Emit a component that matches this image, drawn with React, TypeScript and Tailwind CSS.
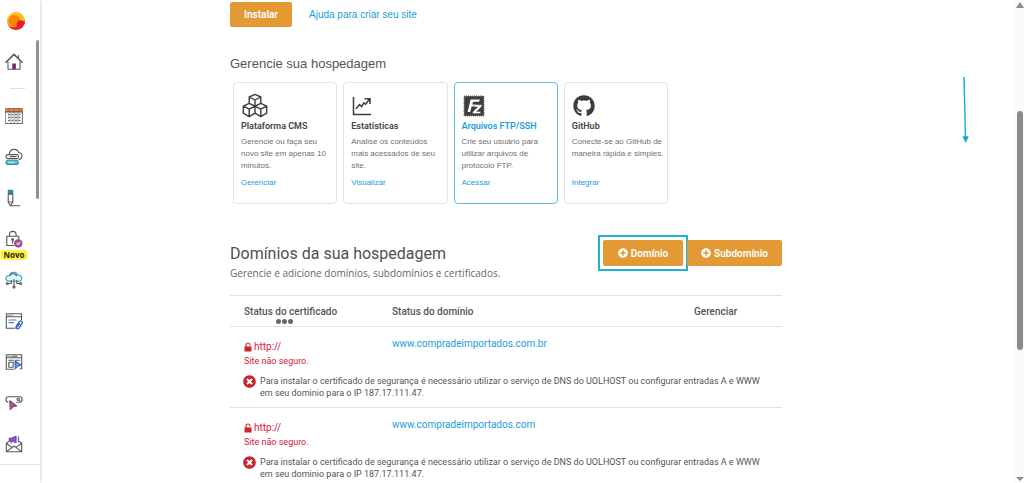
import type { ReactNode } from "react";
import { FaGithub, FaPlusCircle, FaTimesCircle } from "react-icons/fa";

const line = {
  fill: "none",
  stroke: "#58585c",
  strokeWidth: 1.1,
  strokeLinecap: "round" as const,
  strokeLinejoin: "round" as const,
};

function Glyph({ children }: { children: ReactNode }) {
  return (
    <svg viewBox="0 0 18 18" className="size-[18px]" aria-hidden="true" {...line}>
      {children}
    </svg>
  );
}

function HomeIcon() {
  return (
    <Glyph>
      <path d="M1 9.3 9 1.4l8 7.9" strokeWidth="1.6" />
      <path d="M3 9v7.3h12V9M13.5 2.6v3" />
      <path d="M7.3 10.5h3.6v5.6H7.3z" fill="#742a66" stroke="none" />
    </Glyph>
  );
}

function CalendarIcon() {
  return (
    <Glyph>
      <path d="M.6 1.5h16.8v3.4H.6z" fill="#e8833a" stroke="#8a5a3a" strokeWidth=".8" />
      <path d="M.6 4.9h16.8v11.6H.6z" strokeWidth=".9" />
      <path d="M3 7.5h2.2M6.6 7.5h2M10 7.5h2M13.3 7.5h2.2M3 10.5h2.2M6.6 10.5h2M10 10.5h2M13.3 10.5h2.2M3 13.6h2.2M6.6 13.6h2M10 13.6h2M13.3 13.6h2.2" strokeWidth="1.5" stroke="#77777b" strokeLinecap="butt" />
      <path d="M5.9 5v11M9.3 5v11M12.7 5v11" strokeWidth=".5" />
      <path d="M4 2v2M9 2v2M14 2v2" strokeWidth=".8" stroke="#8a5a3a" />
    </Glyph>
  );
}

function CloudServerIcon() {
  return (
    <Glyph>
      <path d="M4.3 6.5C4.5 3.4 6.5 1.4 9.2 1.4c2.2 0 3.8 1.2 4.4 3.1 2 .2 3.4 1.7 3.4 3.7 0 1.8-1.2 3-3 3.3" />
      <rect x="1" y="6.6" width="12.4" height="4" rx="1.6" />
      <path d="M5 8.6h6" />
      <rect x="1" y="12.2" width="12.4" height="4.2" rx="2" fill="#5db9cc" stroke="#3795ab" />
      <path d="M3.5 14.3h6" stroke="#e5f7fa" strokeWidth=".9" />
    </Glyph>
  );
}

function PenIcon() {
  return (
    <Glyph>
      <path d="M3.3 1.3h4.4v3.2H3.3z" fill="#24869e" stroke="#24869e" />
      <path d="M3.2 5.2v8l2.3 3.6 2.3-3.6v-8zM3.2 13h4.6M5.5 16.8h9.3" />
    </Glyph>
  );
}

function LockIcon() {
  return (
    <Glyph>
      <path d="M4.5 6.3V4.6c0-4.3 6.6-4.3 6.6 0v1.7M9 15.5H1.8V6.3h12v3" />
      <path d="M7.6 8.6v4.5" stroke="#8a3f86" strokeWidth="1.3" />
      <circle cx="7.6" cy="9.6" r="1.4" fill="#8a3f86" stroke="none" />
      <circle cx="13.3" cy="13.4" r="3.6" fill="#a05a99" stroke="#8a3f86" />
      <path d="m11.8 13.4 1.1 1.1 2-2.1" stroke="#ecd7ea" />
    </Glyph>
  );
}

function CloudNetworkIcon() {
  return (
    <Glyph>
      <path d="M4.2 10.2c-4.2-.2-4.3-5.8 0-5.6C5.2.7 11.3.1 12.5 4c5.2-.4 5.6 5.9 1.3 6.2z" fill="#e4f6fa" stroke="#3aa4bd" />
      <path d="M5.4 4.5c.7-2 5-2.6 6 .3" />
      <path d="M9 8.3v7M6.2 9.3v3.2H3.3M11.8 9.3v3.2h2.9" />
      <circle cx="9" cy="16" r="1" />
      <circle cx="2.3" cy="12.5" r="1" />
      <circle cx="15.7" cy="12.5" r="1" />
    </Glyph>
  );
}

function BrowserLinkIcon() {
  return (
    <Glyph>
      <path d="M10 16.3H1.3V1.7h15.2v6M1.3 4.8h15.2M3 3.2h.2M5 3.2h.2M7 3.2h.2" />
      <path d="M4 8h7M4 10.6h4.6" stroke="#4d7bd6" />
      <path d="m12 12.8 2.4-3.2a1.6 1.6 0 0 1 2.5 2l-1.4 1.8M14.6 11.6l-2.3 3.2M13.3 12l-1.8 2.2a1.6 1.6 0 0 0 2.5 2l1.8-2.4" stroke="#315fc4" strokeWidth="1.3" />
    </Glyph>
  );
}

function BrowserCursorIcon() {
  return (
    <Glyph>
      <path d="M9 16.3H1.3V1.7h15.4v14H15M1.3 4.8h15.4M3 3.2h.2M5 3.2h.2M7 3.2h5" />
      <path d="M3.8 7.2h4.6M3.8 9.2h4.4v5H3.8zM10.3 7.2h4.3" />
      <path d="m10 8 6.2 3.9-2.9.9-2.9 2.8z" fill="#6f9be8" stroke="#315fc4" />
    </Glyph>
  );
}

function SearchCursorIcon() {
  return (
    <Glyph>
      <path d="M3 8.2c-3-.5-2.4-5.4.4-5.4h11.4c3 0 3 5.5 0 5.5h-3.2" />
      <circle cx="13.2" cy="5.2" r="1.2" />
      <path d="m14.1 6.1 1 1" />
      <path d="m4.8 6.8 7 5.2-3.8.6-2.8 3z" fill="#a85b87" stroke="#8c4470" />
    </Glyph>
  );
}

function MailIcon() {
  return (
    <Glyph>
      <path d="M4 6.4 1.3 8.2v8.5h15.4V8.2L14 6.4M1.3 8.2l6 4.4M16.7 8.2l-6 4.4M1.5 16.6 9 11l7.5 5.6" />
      <path d="M4.3 3.2h2.2L11 1.3v6.2L6.5 5.9H4.3zM6.2 6v2.2" fill="#8b5ac4" stroke="#7440b4" />
      <path d="M13.4 1.7v5.2" stroke="#7440b4" />
    </Glyph>
  );
}

function Logo() {
  return (
    <svg viewBox="0 0 18 18" className="size-[18px]" aria-hidden="true">
      <defs>
        <clipPath id="disc">
          <circle cx="9" cy="9" r="9" />
        </clipPath>
      </defs>
      <g clipPath="url(#disc)">
        <path d="M0 0h18v18H0z" fill="#fbc01a" />
        <path d="M0 11c2 4 6 5 9.5 3.5L18 7v11H0z" fill="#ee1c30" />
        <path d="M9 0c5 1 9 5 9 10l-4-1z" fill="#fbc01a" />
        <circle cx="7.4" cy="9" r="6" fill="#fa8608" />
        <circle cx="13.8" cy="12.4" r="4.1" fill="#ee1c30" />
      </g>
    </svg>
  );
}

const navItems: { label: string; icon: ReactNode; badge?: string }[] = [
  { label: "Agenda", icon: <CalendarIcon /> },
  { label: "Hospedagem", icon: <CloudServerIcon /> },
  { label: "Criador de sites", icon: <PenIcon /> },
  { label: "Certificados", icon: <LockIcon />, badge: "Novo" },
  { label: "Nuvem", icon: <CloudNetworkIcon /> },
  { label: "Domínios", icon: <BrowserLinkIcon /> },
  { label: "Sites", icon: <BrowserCursorIcon /> },
  { label: "Busca", icon: <SearchCursorIcon /> },
  { label: "E-mail", icon: <MailIcon /> },
];

function Sidebar() {
  return (
    <aside className="relative h-full w-10 shrink-0 bg-white shadow-[0_0_4px_rgba(0,0,0,0.25)]">
      <nav className="flex w-7 flex-col items-center">
        <a href="#inicio" aria-label="Início" className="flex h-[41px] items-center pl-[3px]">
          <Logo />
        </a>
        <a href="#painel" aria-label="Painel" className="flex h-[41px] items-center">
          <HomeIcon />
        </a>
        <hr className="my-[6px] ml-[6px] w-[15px] border-[#dedede]" />
        {navItems.map((item) => (
          <a
            key={item.label}
            href="#servico"
            aria-label={item.label}
            className="relative flex h-[41px] items-center"
          >
            {item.icon}
            {item.badge && (
              <span className="absolute top-8 left-1/2 z-10 -translate-x-1/2 rounded-[3px] bg-[#fff23f] px-[3px] font-['Open_Sans',sans-serif] text-[8px] leading-[10px] font-bold text-[#222]">
                {item.badge}
              </span>
            )}
          </a>
        ))}
      </nav>
      <hr className="border-[#e3e3e3]" />
      <div className="absolute top-10 right-[1px] h-[159px] w-[3px] rounded-full bg-[#929292]" />
    </aside>
  );
}

function CubesIcon() {
  return (
    <svg viewBox="0 0 26 26" className="size-[26px]" fill="none" stroke="#3d3d3d" strokeWidth="1.4" strokeLinejoin="round" aria-hidden="true">
      <path d="M13 1.3 18.8 4v6.3L13 13.2l-5.8-2.9V4zM7.2 4 13 7l5.8-3M13 7v6.2" />
      <path d="M7.2 10.4 1.3 13.2v7l5.9 3.5 5.8-3.5v-7M1.3 13.2l5.9 3 5.8-3M7.2 16.2v7.5" />
      <path d="m18.8 10.4 5.9 2.8v7l-5.9 3.5-5.8-3.5M13 13.2l5.8 3 5.9-3M18.8 16.2v7.5" />
    </svg>
  );
}

function TrendIcon() {
  return (
    <svg viewBox="0 0 20 20" className="size-5" fill="none" stroke="#3d3d3d" strokeWidth="1.5" aria-hidden="true">
      <path d="M1.5 1v17.5H19M4 12.7l3.5-4.2 2.2 2 2.2-3.6 1.8 1.4L17.5 3M12.6 2.7H18v5.2" />
    </svg>
  );
}

function FilezillaIcon() {
  return (
    <svg viewBox="0 0 22 22" className="size-[22px]" aria-hidden="true">
      <path d="M1.2 1.2h19.6v19.6H1.2z" fill="#3d3d3d" />
      <path d="M1 1h20v20H1z" fill="none" stroke="#3d3d3d" strokeWidth=".8" strokeDasharray="1 1" />
      <path d="M4.6 17 7.6 4.4h9.2l-.7 2.4H10l-.7 2.6h4.4l-.6 2.2H8.6L7.2 17z" fill="#fff" />
      <path d="M11.2 9.8H19l-.5 2-4.9 4.6h4.2l-.6 2.2H9.4l.6-2.2 4.7-4.4h-4.1z" fill="#fff" stroke="#3d3d3d" strokeWidth=".4" />
    </svg>
  );
}

function OpenLockIcon() {
  return (
    <svg viewBox="0 0 8 10" className="h-[10px] w-2" aria-hidden="true">
      <path d="M.5 4.4h7v5.1h-7z" fill="#c9252d" />
      <path d="M2 4.8V3c0-2.6 4-2.6 4 0v.6" fill="none" stroke="#c9252d" strokeWidth="1.1" />
    </svg>
  );
}

const tools = [
  { title: "Plataforma CMS", text: "Gerencie ou faça seu novo site em apenas 10 minutos.", action: "Gerenciar", icon: <CubesIcon /> },
  { title: "Estatísticas", text: "Analise os conteúdos mais acessados de seu site.", action: "Visualizar", icon: <TrendIcon /> },
  { title: "Arquivos FTP/SSH", text: "Crie seu usuário para utilizar arquivos de protocolo FTP.", action: "Acessar", icon: <FilezillaIcon />, active: true },
  { title: "GitHub", text: "Conecte-se ao GitHub de maneira rápida e simples.", action: "Integrar", icon: <FaGithub className="size-[22px] text-[#3d3d3d]" aria-hidden="true" /> },
];

function ToolCards() {
  return (
    <div className="mt-[9px] ml-[3px] grid w-[435px] grid-cols-4 gap-[6px] font-['Liberation_Sans',sans-serif]">
      {tools.map((tool) => (
        <article
          key={tool.title}
          className={
            tool.active
              ? "flex h-[122px] flex-col rounded-[4px] border border-[#62bce0] pt-[9px] pr-[2px] pl-[7px]"
              : "flex h-[122px] flex-col rounded-[4px] border border-[#e4e4e4] pt-[9px] pr-[2px] pl-[7px]"
          }
        >
          <div className="flex h-7 items-center pl-px">{tool.icon}</div>
          <h3
            className={
              tool.active
                ? "font-[Roboto,sans-serif] text-[9px] leading-3 font-semibold text-[#1a9ce0]"
                : "font-[Roboto,sans-serif] text-[9px] leading-3 font-semibold text-[#444]"
            }
          >
            {tool.title}
          </h3>
          <p className="mt-1 h-9 text-[8px] leading-3 text-[#707070]">{tool.text}</p>
          <a href="#ferramenta" className="mt-[5px] text-[8px] leading-3 text-[#1a9ce0]">
            {tool.action}
          </a>
        </article>
      ))}
    </div>
  );
}

function AddButton({ label, highlighted }: { label: string; highlighted?: boolean }) {
  return (
    <div className={highlighted ? "w-20 outline-2 outline-offset-3 outline-[#1fb3d1]" : "w-[95px]"}>
      <button
        type="button"
        className="flex h-[26px] w-full items-center justify-center gap-[3px] rounded-[2px] bg-[#e39a35] font-[Roboto,sans-serif] text-[10px] font-semibold text-white"
      >
        <FaPlusCircle className="size-[10px]" aria-hidden="true" />
        {label}
      </button>
    </div>
  );
}

const domains = ["www.compradeimportados.com.br", "www.compradeimportados.com"];

function DomainTable() {
  return (
    <table className="mt-[15px] w-full table-fixed border-t border-[#e2e2e2] font-[Roboto,sans-serif] text-[10px]">
      <colgroup>
        <col className="w-[162px]" />
        <col className="w-[302px]" />
        <col />
      </colgroup>
      <thead>
        <tr className="h-[31px] border-b border-[#e2e2e2] text-left text-[#555]">
          <th className="pl-[14px] font-medium">
            <span className="relative">
              Status do certificado
              <span className="absolute top-[13px] left-8 flex gap-px">
                <i className="size-[5px] rounded-full bg-[#666]" />
                <i className="size-[5px] rounded-full bg-[#666]" />
                <i className="size-[5px] rounded-full bg-[#666]" />
              </span>
            </span>
          </th>
          <th className="font-medium">Status do domínio</th>
          <th className="font-medium">Gerenciar</th>
        </tr>
      </thead>
      {domains.map((domain) => (
        <tbody key={domain} className="border-b border-[#e2e2e2]">
          <tr className="align-top">
            <td className="pt-[13px] pl-[14px] text-[#d9143c]">
              <p className="flex items-center gap-[2px] leading-[14px]">
                <OpenLockIcon />
                http://
              </p>
              <p className="text-[9px] leading-[14px]">Site não seguro.</p>
            </td>
            <td className="pt-[10px] leading-[14px]">
              <a href={"http://" + domain} className="text-[#1a9ce0]">
                {domain}
              </a>
            </td>
            <td />
          </tr>
          <tr>
            <td colSpan={3} className="pt-[7px] pr-5 pb-2 pl-[13px]">
              <div className="flex gap-1">
                <FaTimesCircle className="size-[13px] shrink-0 text-[#c9252d]" aria-hidden="true" />
                <p className="text-[9px] leading-3 text-[#555]">
                  Para instalar o certificado de segurança é necessário utilizar o serviço de DNS do
                  UOLHOST ou configurar entradas A e WWW em seu dominio para o IP 187.17.111.47.
                </p>
              </div>
            </td>
          </tr>
        </tbody>
      ))}
    </table>
  );
}

function PageScrollbar() {
  return (
    <div className="flex w-[9px] shrink-0 flex-col items-center bg-[#fafafa] py-[2px]" aria-hidden="true">
      <svg viewBox="0 0 8 6" className="h-[6px] w-2">
        <path d="M4 0 8 6H0z" fill="#8b8b8b" />
      </svg>
      <div className="flex w-full flex-1 flex-col items-center">
        <div className="h-[22%]" />
        <div className="h-[51%] w-[6px] rounded-full bg-[#8b8b8b]" />
      </div>
      <svg viewBox="0 0 8 4" className="h-1 w-2">
        <path d="M4 4 8 0H0z" fill="#8b8b8b" />
      </svg>
    </div>
  );
}

export default function App() {
  return (
    <div className="relative flex h-screen overflow-hidden bg-white font-['Liberation_Sans',sans-serif]">
      <Sidebar />
      <main className="min-w-0 flex-1 pl-[190px]">
        <div className="w-full max-w-[552px] pt-[2px]">
          <div className="flex items-center gap-[17px]">
            <button type="button" className="h-[25px] w-[62px] rounded-[2px] bg-[#e39a35] font-[Roboto,sans-serif] text-[10px] font-semibold text-white">
              Instalar
            </button>
            <a href="#ajuda" className="text-[10px] text-[#1a9ce0]">
              Ajuda para criar seu site
            </a>
          </div>
          <h2 className="mt-[28px] text-[13px] leading-[18px] text-[#555]">Gerencie sua hospedagem</h2>
          <ToolCards />
          <div className="mt-[36px] flex items-start justify-between">
            <div>
              <h2 className="mt-[4px] font-[Roboto,sans-serif] text-base leading-[20px] text-[#505050]">
                Domínios da sua hospedagem
              </h2>
              <p className="mt-[2px] font-['Open_Sans',sans-serif] text-[10px] leading-[14px] text-[#666]">
                Gerencie e adicione domínios, subdomínios e certificados.
              </p>
            </div>
            <div className="flex gap-1">
              <AddButton label="Domínio" highlighted />
              <AddButton label="Subdomínio" />
            </div>
          </div>
          <DomainTable />
        </div>
      </main>
      <svg viewBox="0 0 8 68" className="absolute top-[76px] right-[55px] h-[68px] w-2" aria-hidden="true">
        <path d="M3 1 4.5 62" stroke="#12acd0" strokeWidth="1.4" />
        <path d="M1.4 60.3h6.4L4.7 67z" fill="#12acd0" />
      </svg>
      <PageScrollbar />
    </div>
  );
}
